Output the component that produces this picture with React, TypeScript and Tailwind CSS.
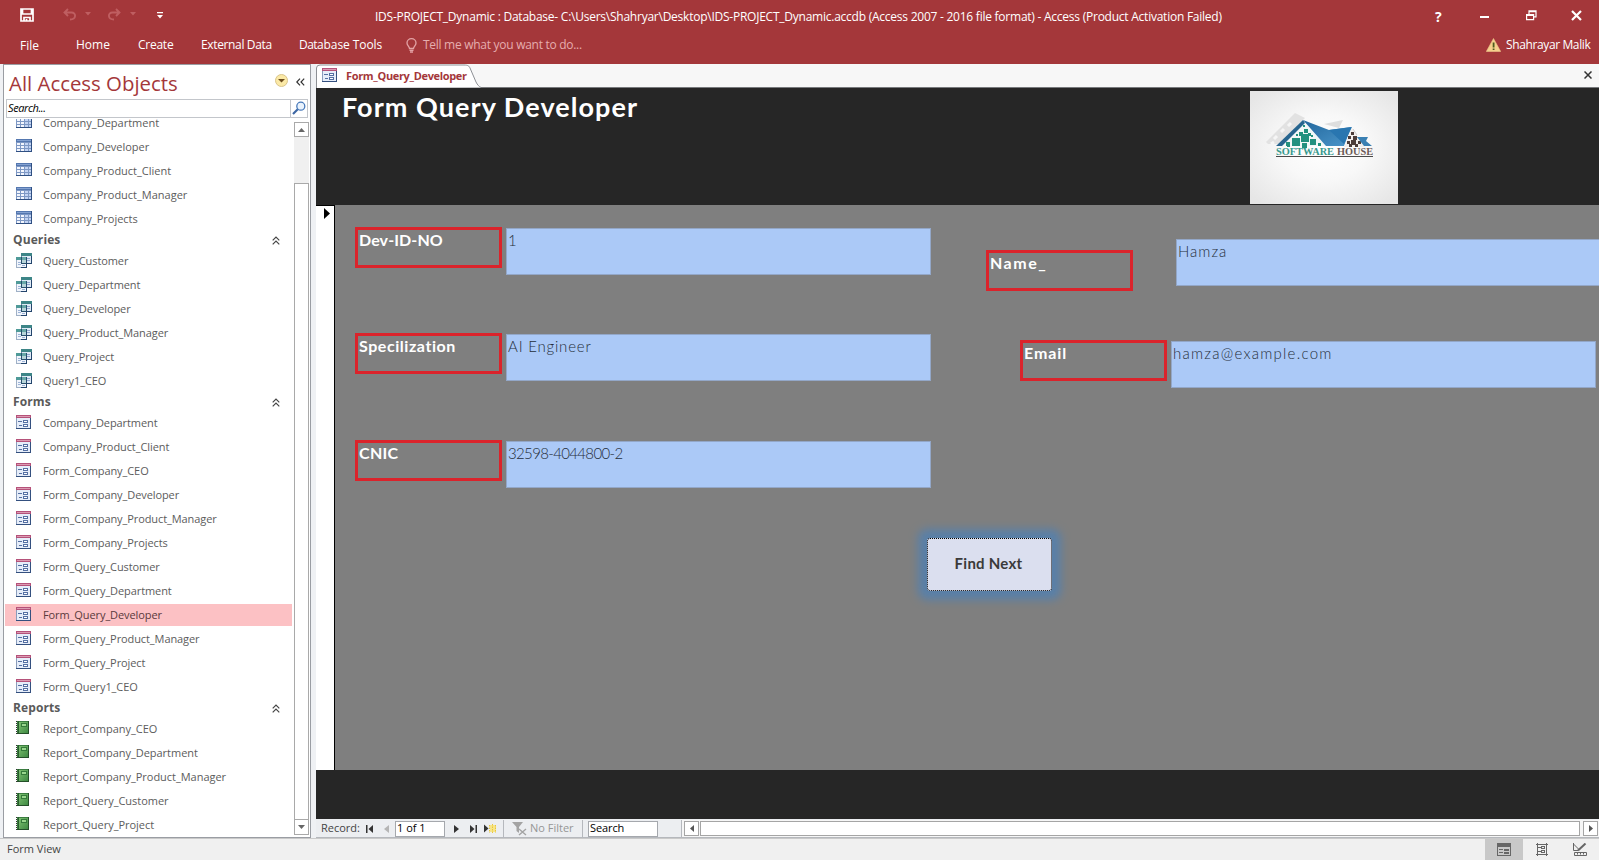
import React from "react";

type Kind = "table" | "query" | "form" | "report";

const ui = "font-['Segoe_UI','Open_Sans',sans-serif]";

function TableIcon() {
  return (
    <svg width="16" height="13" viewBox="0 0 16 13" shapeRendering="crispEdges" className="-mt-[3px]">
      <rect width="16" height="13" fill="#7e98c4" />
      <rect width="16" height="3" fill="#5578b0" />
      <rect x="1" y="1" width="14" height="1" fill="#86a3d2" />
      {[3, 6, 9].map((y) =>
        [1, 5, 9, 13].map((x) => (
          <rect key={`${x}-${y}`} x={x} y={y + 1} width={x === 13 ? 2 : 3} height="2" fill={x > 8 ? "#c3d4f3" : "#f3f6fd"} />
        ))
      )}
      <rect y="12" width="16" height="1" fill="#2f4f82" />
      <rect x="15" width="1" height="13" fill="#2f4f82" />
    </svg>
  );
}

function QueryIcon() {
  return (
    <svg width="16" height="15" viewBox="0 0 16 15" shapeRendering="crispEdges" className="-mt-px">
      <rect x="5" y="0" width="11" height="11" fill="#6f8bab" />
      <rect x="5" y="0" width="11" height="3" fill="#3d8587" />
      <rect x="6" y="3" width="9" height="7" fill="#dfeaf6" />
      <path d="M11 5.500h3M11 7.500h3" stroke="#8fa8cf" />
      <rect x="0" y="4" width="11" height="11" fill="#9fb0c6" />
      <rect x="0" y="4" width="11" height="3" fill="#4f9a98" />
      <rect x="1" y="7" width="9" height="7" fill="#f1f5fc" />
      <path d="M2 9.500h3M2 11.500h3M6 12.500h3" stroke="#9db4d8" />
      <path d="M5.500 4V10.500H10.500V4" stroke="#27506e" fill="#7fb5b8" fillOpacity=".5" />
      <path d="M10.500 7v7.500M5 14.500h6M15.500 3v8M11 10.500h5" stroke="#24456c" />
    </svg>
  );
}

function FormIcon() {
  return (
    <svg width="15" height="14" viewBox="0 0 15 14" shapeRendering="crispEdges" className="-mt-[3px]">
      <rect width="15" height="14" fill="#8a9cbb" />
      <rect width="15" height="3" fill="#b5527a" />
      <rect x="1" y="1" width="13" height="1" fill="#dc9ab2" />
      <rect x="1" y="3" width="13" height="10" fill="#e6edf9" />
      <path d="M2 6.500h4M3 10.500h3" stroke="#5570a3" />
      <path d="M7.500 5.500h4v2h-4zM7.500 9.500h4v2h-4z" stroke="#5570a3" fill="#fff" />
      <path d="M0 13.500h15M14.500 3v11" stroke="#34507f" />
    </svg>
  );
}

function ReportIcon() {
  return (
    <svg width="13" height="13" viewBox="0 0 13 13" shapeRendering="crispEdges" className="-mt-[3px]">
      <defs>
        <linearGradient id="cover" x1="0" y1="0" x2="1" y2="1">
          <stop offset="0" stopColor="#7cc06f" />
          <stop offset="1" stopColor="#3f8a43" />
        </linearGradient>
      </defs>
      <rect x="1" width="12" height="13" fill="#3b7d40" />
      <rect x="3" y="1" width="9" height="11" fill="url(#cover)" />
      <rect x="5" y="2" width="6" height="4" fill="#347a3a" />
      <rect x="6" y="3" width="4" height="2" fill="#9ad68e" />
      <path d="M2.500 0v13" stroke="#2a5c30" />
      <path d="M.5 0v13" stroke="#333" strokeDasharray="1 1" />
      <path d="M1 12.500h12M12.500 0v13" stroke="#244f29" />
    </svg>
  );
}

const icons: Record<Kind, () => React.ReactElement> = {
  table: TableIcon,
  query: QueryIcon,
  form: FormIcon,
  report: ReportIcon,
};

const tracking: Record<Kind, string> = {
  table: "tracking-[0px]",
  query: "tracking-[-0.09px]",
  form: "tracking-[-0.09px]",
  report: "tracking-[-0.03px]",
};

function Item({ kind, label, selected }: { kind: Kind; label: string; selected?: boolean }) {
  const Icon = icons[kind];
  return (
    <li className="flex h-6 items-center pr-[2px]">
      <div
        className={
          selected
            ? "flex h-[22px] w-full items-center bg-[#fcc1c4] pl-[11px] text-[#5a3a3c]"
            : "flex h-[22px] w-full items-center pl-[11px] text-[#5c5c5c]"
        }
      >
        <span className="w-[27px] shrink-0">
          <Icon />
        </span>
        <span className={`text-[11px] leading-[16px] ${tracking[kind]}`}>{label}</span>
      </div>
    </li>
  );
}

function Group({ title, kind, items, selected }: { title?: string; kind: Kind; items: string[]; selected?: string }) {
  return (
    <section>
      {title && (
        <h2 className="flex h-[18px] items-center justify-between pr-[14px] pl-2 text-[12px] font-bold tracking-[0.1px] text-[#5a5a5a]">
          {title}
          <svg width="8" height="9" viewBox="0 0 8 9" fill="none" stroke="#444" strokeWidth="1.200">
            <path d="M.7 4.300 4 1l3.300 3.300M.7 8.300 4 5l3.300 3.300" />
          </svg>
        </h2>
      )}
      <ul>
        {items.map((i) => (
          <Item key={i} kind={kind} label={i} selected={i === selected} />
        ))}
      </ul>
    </section>
  );
}

function TitleBar() {
  return (
    <header className="h-16 shrink-0 bg-[#a4373a] text-[12px] text-white">
      <div className="flex h-8 items-center">
        <div className="flex w-[375px] items-center pl-5">
          <svg width="14" height="14" viewBox="0 0 14 14" fill="none" stroke="#fff" strokeWidth="1.700" className="-mt-[2px]">
            <path d="M1 1h12v12H1zM2.500 1v5h9V1" />
            <path d="M4 13V9.500h6V13M6.500 11v2" />
          </svg>
          <svg width="14" height="13" viewBox="0 0 14 13" fill="none" stroke="#bf5e61" strokeWidth="1.900" className="-mt-1 ml-[29px]">
            <path d="M5 1 1.500 4.500 5 8M1.500 4.500h7c5 0 5 7-1.500 7" />
          </svg>
          <svg width="6" height="4" viewBox="0 0 6 4" fill="#bf5e61" className="-mt-1 ml-2"><path d="M0 0h6L3 3.500z" /></svg>
          <svg width="14" height="13" viewBox="0 0 14 13" fill="none" stroke="#bf5e61" strokeWidth="1.900" className="-mt-1 ml-4">
            <path d="M9 1l3.500 3.500L9 8M12.500 4.500h-7c-5 0-5 7 1.500 7" />
          </svg>
          <svg width="6" height="4" viewBox="0 0 6 4" fill="#bf5e61" className="-mt-1 ml-[9px]"><path d="M0 0h6L3 3.500z" /></svg>
          <svg width="6" height="7" viewBox="0 0 6 7" fill="#fff" className="-mt-[2px] ml-[21px]"><path d="M0 0h6v1.200H0zM0 3h6L3 6.500z" /></svg>
        </div>
        <h1 className="grow pt-[2px] text-[12px] tracking-[-0.242px] whitespace-nowrap">
          IDS-PROJECT_Dynamic : Database- C:\Users\Shahryar\Desktop\IDS-PROJECT_Dynamic.accdb (Access 2007 - 2016 file format) - Access (Product Activation Failed)
        </h1>
        <div className="flex w-[165px] shrink-0 items-center pl-[1px]">
          <b className="w-[10px] text-[14px]">?</b>
          <svg width="10" height="3" className="mt-[2px] ml-[35px]"><path d="M0 0h9v2H0z" fill="#fff" /></svg>
          <svg width="11" height="11" viewBox="0 0 11 11" fill="none" stroke="#fff" strokeWidth="1.200" className="-mt-[2px] ml-[36px]">
            <path d="M.6 4.600h7v5H.6zM.6 5.500h7M3 4V.8h7v6H8M3 1.600h7" />
          </svg>
          <svg width="11" height="11" viewBox="0 0 11 11" stroke="#fff" strokeWidth="2.200" className="-mt-[2px] ml-[34px]">
            <path d="M1 1l9 9M10 1l-9 9" />
          </svg>
        </div>
      </div>
      <nav className="flex h-[26px] items-center whitespace-nowrap">
        <span className="w-14 pt-[2px] pl-5">File</span>
        <span className="w-[62px] pl-5">Home</span>
        <span className="w-[63px] pl-5 tracking-[-0.25px]">Create</span>
        <span className="w-[98px] pl-5 tracking-[-0.36px]">External Data</span>
        <span className="w-[127px] pl-5 tracking-[-0.5px]"><span className="tracking-[-0.55px]">Dat</span><span className="tracking-[-0.09px]">abase Tools</span></span>
        <svg width="11" height="15" viewBox="0 0 11 15" fill="none" stroke="#e3a3a5" strokeWidth="1.300">
          <path d="M3.500 10.500C3.500 8.500 1 7.500 1 5a4.500 4.300 0 0 1 9 0c0 2.500-2.500 3.500-2.500 5.500zM3.500 12.300h4M4 14h3" />
        </svg>
        <span className="ml-[6px] grow tracking-[-0.28px] text-[#e6adaf]">Tell me what you want to do...</span>
        <svg width="15" height="14" viewBox="0 0 15 14" className="mr-[5px]">
          <path d="M7.500.5 14.700 13.500H.3z" fill="#f5d08c" stroke="#efc58a" strokeWidth=".6" />
          <path d="M6.700 4.500h1.800v5H6.700zM6.700 10.500h1.800v1.600H6.700z" fill="#4c5a1d" />
        </svg>
        <span className="w-[93px] tracking-[-0.38px]">Shahrayar Malik</span>
      </nav>
    </header>
  );
}

function NavPane() {
  return (
    <aside className="mr-[5px] ml-[3px] flex h-[774px] w-[308px] shrink-0 flex-col border border-[#9a9da3] bg-white">
      <div className="flex h-[34px] shrink-0 items-center pr-[5px] pl-[5px]">
        <span className="grow pt-[2px] text-[20.4px] leading-[28px] text-[#a4373a]">All Access Objects</span>
        <svg width="13" height="13" viewBox="0 0 13 13" className="-mt-[3px] mr-[8px]">
          <circle cx="6.500" cy="6.500" r="6" fill="#fbe9a6" stroke="#d9c48a" />
          <path d="M3 5h7L6.500 8.500z" fill="#6b4b1d" />
        </svg>
        <svg width="9" height="8" viewBox="0 0 9 8" fill="none" stroke="#333" strokeWidth="1.200" className="-mt-px">
          <path d="M4 .7.800 4 4 7.300M8.200.7 5 4l3.200 3.300" />
        </svg>
      </div>
      <div className="mx-[2px] flex h-[19px] shrink-0 items-center border border-[#c3c6cb]">
        <i className="grow pb-[2px] pl-px text-[11px] leading-4 tracking-[-0.4px] text-black">Search...</i>
        <span className="flex h-full w-[17px] items-center border-l border-[#c3c6cb] pl-[1px]">
          <svg width="14" height="14" viewBox="0 0 14 14" fill="none" className="-mt-[2px]">
            <path d="M1 13l5-5" stroke="#3c66a3" strokeWidth="2.200" />
            <circle cx="8.800" cy="5.200" r="4" fill="#eaf3fd" stroke="#4779ba" strokeWidth="1.300" />
          </svg>
        </span>
      </div>
      <div className="flex min-h-0 grow pt-px">
        <div className="h-full grow overflow-hidden pl-px">
          <div className="-mt-[8px]">
            <Group kind="table" items={["Company_Department", "Company_Developer", "Company_Product_Client", "Company_Product_Manager", "Company_Projects"]} />
            <Group title="Queries" kind="query" items={["Query_Customer", "Query_Department", "Query_Developer", "Query_Product_Manager", "Query_Project", "Query1_CEO"]} />
            <Group
              title="Forms"
              kind="form"
              selected="Form_Query_Developer"
              items={["Company_Department", "Company_Product_Client", "Form_Company_CEO", "Form_Company_Developer", "Form_Company_Product_Manager", "Form_Company_Projects", "Form_Query_Customer", "Form_Query_Department", "Form_Query_Developer", "Form_Query_Product_Manager", "Form_Query_Project", "Form_Query1_CEO"]}
            />
            <Group title="Reports" kind="report" items={["Report_Company_CEO", "Report_Company_Department", "Report_Company_Product_Manager", "Report_Query_Customer", "Report_Query_Project"]} />
          </div>
        </div>
        <div className="mt-[3px] mr-px mb-[2px] flex w-[15px] shrink-0 flex-col bg-[#f0f0f0]">
          <span className="flex h-[15px] shrink-0 items-center justify-center border border-[#a9a9a9] bg-white">
            <svg width="7" height="4"><path d="M0 4h7L3.500 0z" fill="#666" /></svg>
          </span>
          <span className="mt-[46px] grow border border-[#a9a9a9] bg-white" />
          <span className="-mt-px flex h-4 shrink-0 items-center justify-center border border-[#a9a9a9] bg-white">
            <svg width="7" height="4"><path d="M0 0h7L3.500 4z" fill="#666" /></svg>
          </span>
        </div>
      </div>
    </aside>
  );
}

function Logo() {
  const tiles = [
    [54, 38, 4], [49, 41, 4], [58, 42, 3], [51, 43, 8], [42, 47, 8], [52, 52, 5], [60, 48, 6], [36, 51, 4], [37, 53, 3], [61, 44, 2], [53, 34, 2], [68, 52, 3], [46, 43, 2],
  ];
  const dark = [[101, 41, 3], [98, 45, 3], [103, 45, 4], [97, 50, 3], [101, 49, 5], [108, 50, 3], [99, 53, 3], [105, 53, 3]];
  return (
    <svg width="148" height="113" viewBox="0 0 148 113">
      <defs>
        <radialGradient id="paper" cx="50%" cy="50%" r="65%">
          <stop offset="0" stopColor="#fff" />
          <stop offset=".45" stopColor="#f8f8f8" />
          <stop offset="1" stopColor="#e6e6e6" />
        </radialGradient>
        <linearGradient id="roof" x1="0" y1="0" x2="1" y2="1">
          <stop offset="0" stopColor="#22679d" />
          <stop offset="1" stopColor="#4b96ca" />
        </linearGradient>
      </defs>
      <rect width="148" height="113" fill="url(#paper)" />
      <path d="M16 51 45 22l10 5-26 26H18z" fill="#e2e2e2" />
      <path d="M74 33l19-4-4 8z" fill="#dedede" />
      <path d="M24 48l3-3M31 41l3-3M38 35l3-3M21 53l3-2" stroke="#f6f6f6" strokeWidth="3" />
      <path d="M53 31 77 55H30z" fill="#f2f8f7" />
      {tiles.map(([x, y, s]) => <rect key={`${x}-${y}`} x={x} y={y} width={s} height={s} fill="#23917f" />)}
      <path d="M53 29l2 3-23 23h-6z" fill="#27658f" />
      <path d="M53 29l26 10 22-3-7 19H76z" fill="url(#roof)" />
      <path d="M79 39l23-3-8 17z" fill="#2976b0" />
      <path d="M102 37 115 56H94z" fill="#f3efed" />
      {dark.map(([x, y, s]) => <rect key={`${x}-${y}`} x={x} y={y} width={s} height={s} fill="#4d3d3a" />)}
      <path d="M107 46h11l-2 4 6 5h-8z" fill="#3a80b3" />
      <path d="M103 38l4 6" stroke="#cfcfcf" />
      <text x="26" y="64" textLength="58" lengthAdjust="spacingAndGlyphs" fontSize="10.500" fontFamily="Liberation Serif, serif" fontWeight="700" fill="#379a8e">SOFTWARE</text>
      <text x="87" y="64" textLength="36" lengthAdjust="spacingAndGlyphs" fontSize="10.500" fontFamily="Liberation Serif, serif" fontWeight="700" fill="#6b5a57">HOUSE</text>
      <path d="M26 65.500h97" stroke="#4a4a4a" />
    </svg>
  );
}

function Label({ children, className }: { children: string; className?: string }) {
  return (
    <div className={`h-[41px] w-[147px] shrink-0 border-[3px] border-[#db232b] pl-px text-[16px] leading-[20px] font-bold text-white ${className ?? ""}`}>
      {children}
    </div>
  );
}

function Field({ children, className }: { children: string; className?: string }) {
  return (
    <div className={`h-[47px] w-[425px] shrink-0 border border-[#93a7c8] bg-[#abc9f7] pl-px text-[15px] leading-[22px] font-light text-[#262f3a] ${className ?? ""}`}>
      {children}
    </div>
  );
}

function FormCanvas() {
  return (
    <div className="flex h-[565px] shrink-0 bg-[#7f7f7f] font-['Century_Gothic',Lato,sans-serif]">
      <div className="w-[19px] shrink-0 border-t border-r border-black bg-white pt-[2px] pl-[8px]">
        <svg width="6" height="11"><path d="M0 0 6 5.500 0 11z" fill="#000" /></svg>
      </div>
      <div className="grow overflow-hidden">
        <div className="flex">
          <div className="w-[596px] shrink-0 pt-[22px] pl-5">
            <div className="flex h-[106px] gap-1"><Label className="tracking-[0.1px]">Dev-ID-NO</Label><div className="pt-px"><Field>1</Field></div></div>
            <div className="flex h-[107px] gap-1"><Label className="tracking-[0.55px]">Specilization</Label><div className="pt-px"><Field className="tracking-[0.8px]">AI Engineer</Field></div></div>
            <div className="flex gap-1"><Label className="tracking-[0.3px]">CNIC</Label><div className="pt-px"><Field className="tracking-[-0.65px]">32598-4044800-2</Field></div></div>
          </div>
          <div className="shrink-0">
            <div className="flex h-[135px] gap-[43px] pt-[34px] pl-[55px]">
              <div className="pt-[11px]"><Label className="tracking-[1.5px]">Name_</Label></div>
              <Field className="tracking-[1px]">Hamza</Field>
            </div>
            <div className="flex gap-1 pl-[89px]"><Label className="tracking-[0.9px]">Email</Label><div className="pt-px"><Field className="tracking-[1.25px]">hamza@example.com</Field></div></div>
          </div>
        </div>
        <button className="mt-[50px] ml-[592px] block h-[53px] w-[125px] rounded-[3px] border border-dotted border-black bg-[#dbdfef] pr-[2px] pb-[2px] text-[15px] font-bold tracking-[0.25px] text-[#3a3a3a] shadow-[0_0_8px_9px_#5a80a8]">
          Find Next
        </button>
      </div>
    </div>
  );
}

function RecordBar() {
  return (
    <div className="flex h-[19px] shrink-0 items-center border-b border-[#b5b8bd] bg-[#eceef1] pt-px text-[11px] whitespace-nowrap text-[#444]">
      <span className="w-[50px] pl-[5px]">Record:</span>
      <svg width="7" height="8" fill="#333"><path d="M0 0h1.500v8H0zM7 0v8L2.500 4z" /></svg>
      <svg width="5" height="8" fill="#b5b5b5" className="ml-[11px]"><path d="M5 0v8L0 4z" /></svg>
      <span className="ml-[6px] flex h-4 w-[50px] items-center border border-[#a5a8ad] bg-white pl-px text-black">1 of 1</span>
      <svg width="5" height="8" fill="#333" className="ml-[9px]"><path d="M0 0v8l5-4z" /></svg>
      <svg width="7" height="8" fill="#333" className="ml-[11px]"><path d="M0 0v8l4.500-4zM5.500 0H7v8H5.500z" /></svg>
      <svg width="13" height="9" className="ml-[7px]">
        <path d="M0 .5v8l4.500-4z" fill="#333" />
        <rect x="6" y="1" width="6" height="7" fill="#f7e58a" />
        <path d="M5.500 1v8M8.500 0v9M11.500 1v8" stroke="#e8c63a" strokeDasharray="1.500 1" />
      </svg>
      <span className="ml-[6px] h-full w-px bg-[#b5b8bd]" />
      <svg width="15" height="15" viewBox="0 0 15 15" className="ml-[8px]">
        <path d="M0 1h11L7 6v6L4.500 10V6z" fill="#a3a3a3" />
        <path d="M7 8l7 6M14 8l-7 6" stroke="#a3a3a3" strokeWidth="1.400" />
      </svg>
      <span className="ml-[3px] w-[52px] text-[#969696]">No Filter</span>
      <span className="h-full w-px bg-[#b5b8bd]" />
      <span className="ml-[5px] flex h-4 w-[70px] items-center border border-[#a5a8ad] bg-white pl-px tracking-[-0.1px] text-black">Search</span>
      <span className="ml-[23px] flex h-full grow items-center border-l border-[#b5b8bd] bg-[#f6f6f6] pl-[2px]">
        <span className="flex h-[15px] w-[15px] items-center justify-center border border-[#a5a5a5] bg-white">
          <svg width="4" height="7" fill="#555"><path d="M4 0v7L0 3.500z" /></svg>
        </span>
        <span className="ml-px h-[15px] w-[880px] border border-[#a5a5a5] bg-white" />
        <span className="ml-[3px] flex h-[15px] w-[15px] items-center justify-center border border-[#a5a5a5] bg-white">
          <svg width="4" height="7" fill="#555"><path d="M0 0v7l4-3.500z" /></svg>
        </span>
      </span>
    </div>
  );
}

function StatusBar() {
  return (
    <footer className="flex h-[22px] shrink-0 items-center border-t border-[#c9c9c9] bg-[#f0f0f0] text-[11px] text-[#444]">
      <span className="grow pl-[7px]">Form View</span>
      <span className="flex h-full w-[38px] items-center justify-center bg-[#c8c8c8]">
        <svg width="14" height="13" viewBox="0 0 14 13" shapeRendering="crispEdges">
          <path d="M.5.5h13v12H.5z" fill="none" stroke="#666" />
          <path d="M0 0h14v4H0zM2 6h4v1H2zM7 6h5v2H7zM2 9h4v1H2zM7 9h5v2H7z" fill="#666" />
        </svg>
      </span>
      <svg width="12" height="13" viewBox="0 0 12 13" fill="none" stroke="#666" shapeRendering="crispEdges" className="ml-[13px]">
        <path d="M0 1.500h12M0 11.500h12M1.500 0v13M10.500 0v13M2 4.500h3M5.500 3.500h3v2h-3zM2 8.500h3M5.500 7.500h3v2h-3z" />
      </svg>
      <svg width="14" height="13" viewBox="0 0 14 13" fill="none" stroke="#666" className="mr-3 ml-[25px]">
        <path d="M.5 0v7.500H5M.5 1l5 5" />
        <path d="M5 7.500 12.500.500" strokeWidth="2" />
        <path d="M1.500 9.500h12v3h-12zM4.500 10v1.500M7.500 10v1.500M10.500 10v1.500" />
      </svg>
    </footer>
  );
}

export default function App() {
  return (
    <div className={`flex h-[860px] w-[1599px] flex-col overflow-hidden bg-[#eff1f4] ${ui}`}>
      <TitleBar />
      <div className="flex h-[774px] shrink-0">
        <NavPane />
        <main className="flex min-w-0 grow flex-col">
          <div className="flex h-6 shrink-0 items-center border-b border-[#77797c] bg-[#f7f7f7]">
            <div className="relative flex h-full w-[166px] items-center">
              <svg width="166" height="24" viewBox="0 0 166 24" className="absolute top-0 left-0">
                <path d="M.5 24V4Q.5 1 4 1h144c4 0 5 1 6 3l6 14c1.500 3 3 4.500 5 5.500" fill="#fff" stroke="#8d9095" />
              </svg>
              <span className="relative flex items-center pt-px pl-[6px]">
                <FormIcon />
                <b className="ml-[9px] text-[11px] tracking-[-0.34px] text-[#a4373a]">Form_Query_Developer</b>
              </span>
            </div>
            <svg width="8" height="8" viewBox="0 0 8 8" stroke="#333" strokeWidth="1.500" className="-mt-px mr-[7px] ml-auto">
              <path d="M.5.5l7 7M7.500.5l-7 7" />
            </svg>
          </div>
          <div className="flex h-[117px] shrink-0 items-start justify-between bg-[#262626] pr-[201px] pl-[26px]">
            <h2 className="pt-[2px] font-['Century_Gothic',Lato,sans-serif] text-[27px] leading-[34px] font-bold tracking-[1.05px] text-white">Form Query Developer</h2>
            <div className="pt-[3px]"><Logo /></div>
          </div>
          <FormCanvas />
          <div className="h-[49px] shrink-0 bg-[#262626]" />
          <RecordBar />
        </main>
      </div>
      <StatusBar />
    </div>
  );
}
